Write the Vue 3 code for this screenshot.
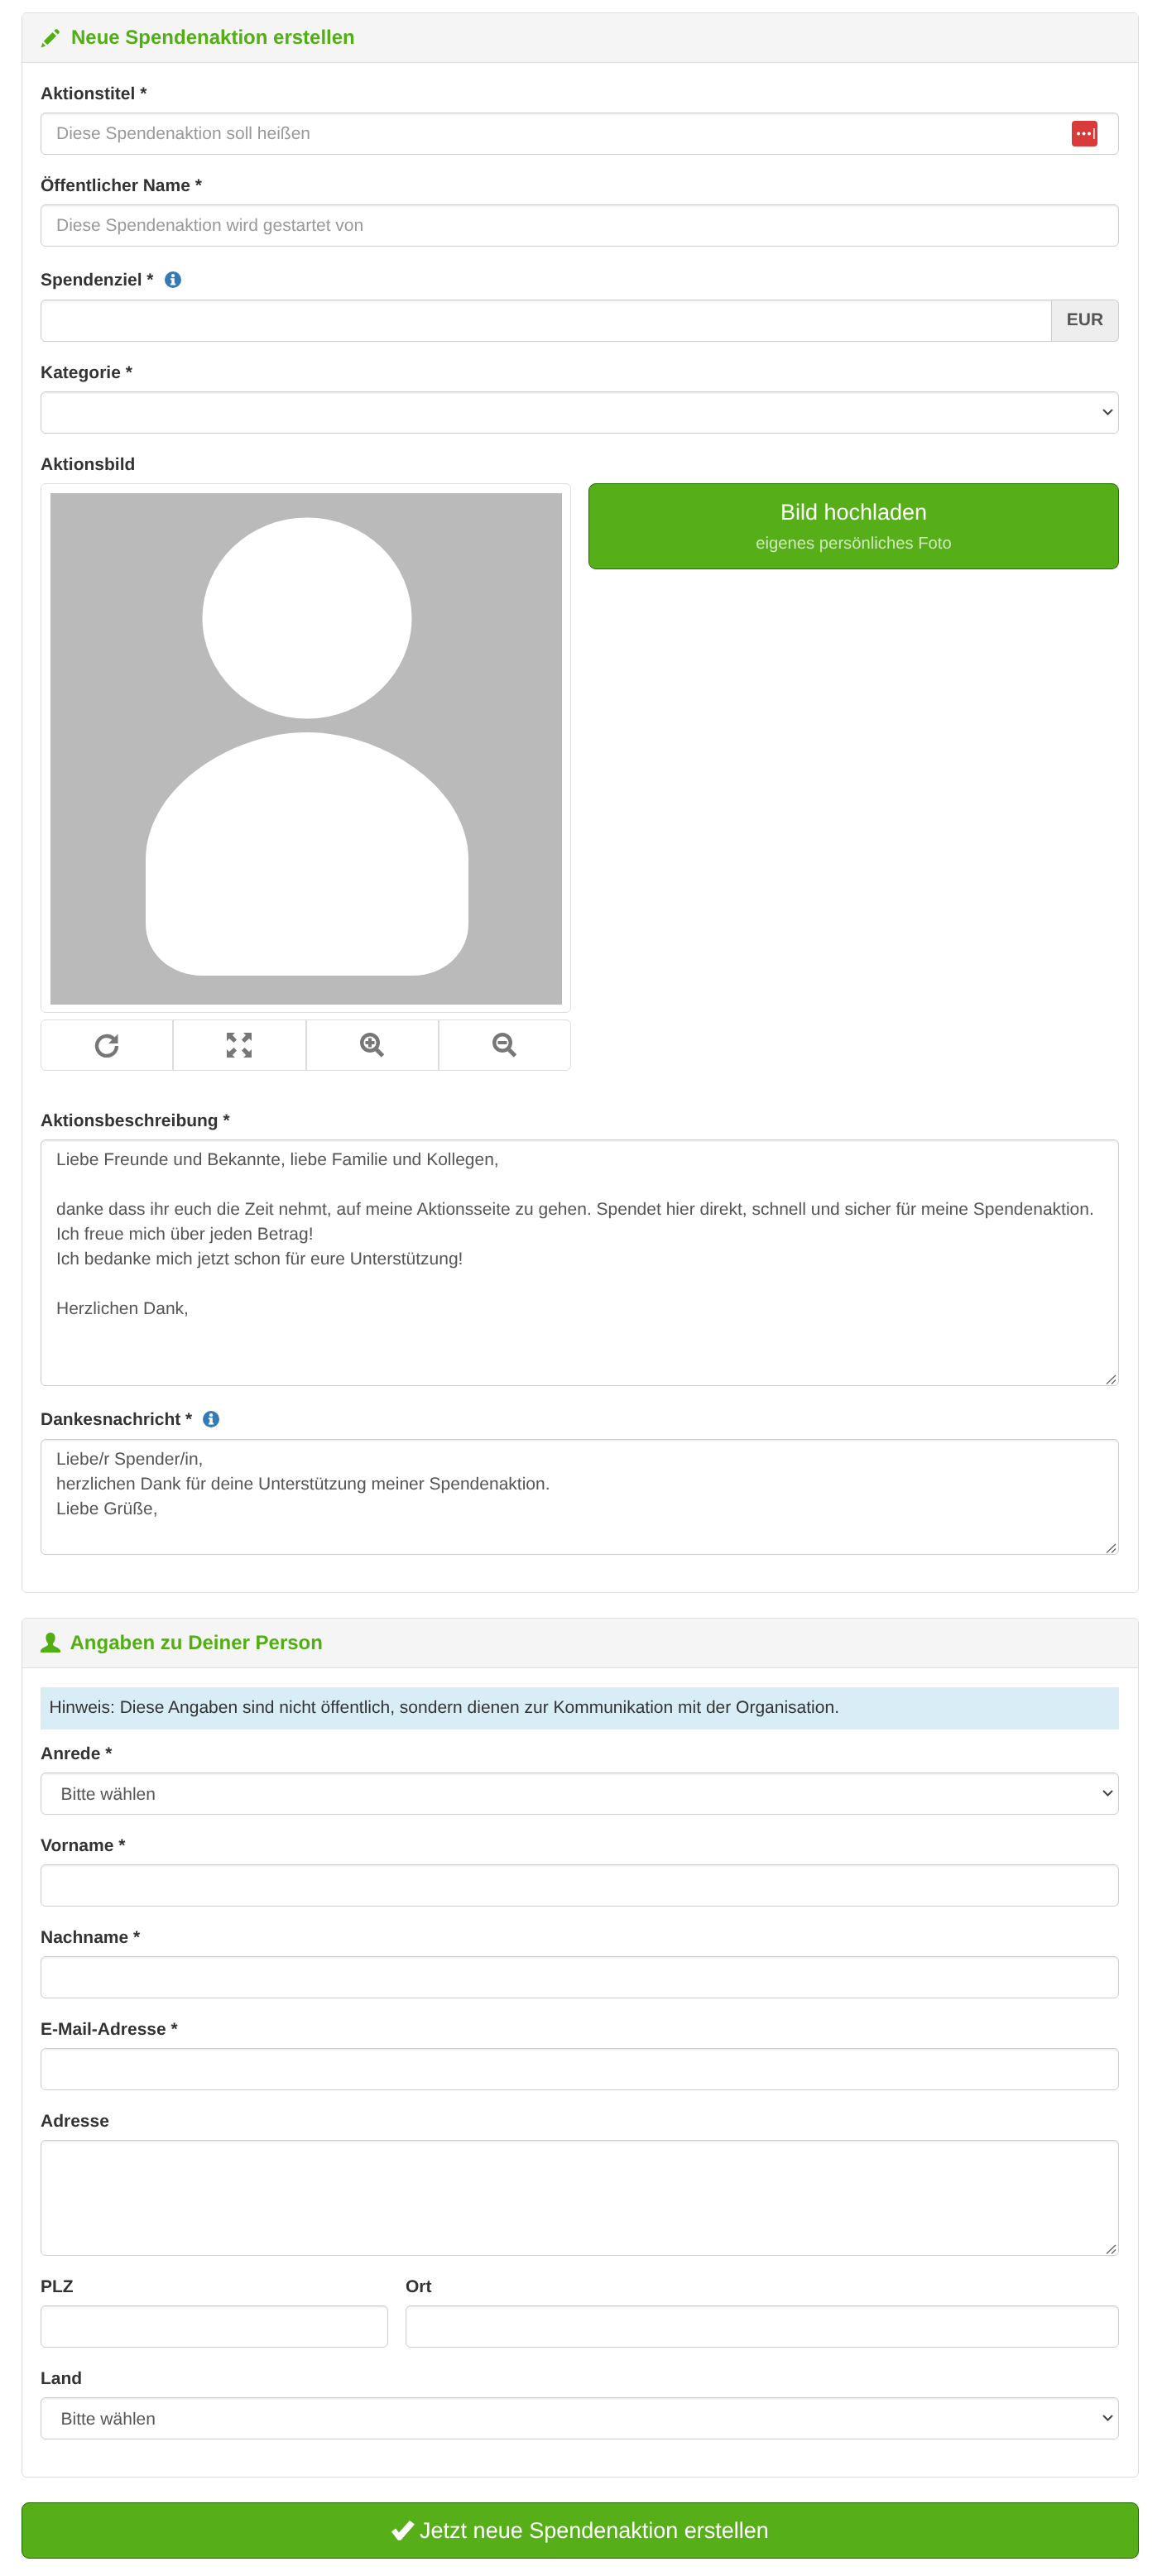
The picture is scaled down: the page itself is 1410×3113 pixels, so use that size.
<template>
  <div class="page">
    <section class="panel">
      <h3 class="panel-heading">
        <svg class="head-icon" viewBox="0 0 24 24">
          <polygon points="0.5,23.5 2.5,17.8 6.2,21.5" />
          <polygon points="3.8,15.8 14.6,5 19,9.4 8.2,20.2" />
          <polygon points="16.4,3.2 18,1.6 20,1.2 22.8,4 22.4,6 20.8,7.6" />
        </svg>
        <span>Neue Spendenaktion erstellen</span>
      </h3>
      <div class="panel-body">
        <div class="group">
          <label>Aktionstitel *</label>
          <div class="overlay-wrap">
            <input class="control" type="text" placeholder="Diese Spendenaktion soll heißen" />
            <svg class="pw-icon" viewBox="0 0 31 31">
              <rect width="31" height="31" rx="4" fill="#d93a3a" />
              <circle cx="8" cy="15.5" r="2" fill="#fff" />
              <circle cx="14.5" cy="15.5" r="2" fill="#fff" />
              <circle cx="21" cy="15.5" r="2" fill="#fff" />
              <rect x="26" y="9" width="1.6" height="13" fill="#fff" />
            </svg>
          </div>
        </div>
        <div class="group">
          <label>Öffentlicher Name *</label>
          <input class="control" type="text" placeholder="Diese Spendenaktion wird gestartet von" />
        </div>
        <div class="group">
          <label class="with-info">
            Spendenziel *
            <svg class="info" viewBox="0 0 20 20">
              <circle cx="10" cy="10" r="10" fill="#337ab7" />
              <circle cx="10" cy="5.2" r="2.1" fill="#fff" />
              <path d="M7 8.2h4.8v6.2h1.4v2H6.9v-2h1.4v-4.2H7z" fill="#fff" />
            </svg>
          </label>
          <div class="input-group">
            <input class="control" type="text" />
            <span class="addon">EUR</span>
          </div>
        </div>
        <div class="group">
          <label>Kategorie *</label>
          <div class="overlay-wrap">
            <select class="control"><option></option></select>
            <svg class="chevron" viewBox="0 0 13 8"><path d="M1 1l5.5 5.5L12 1" /></svg>
          </div>
        </div>
        <div class="group group-image">
          <label>Aktionsbild</label>
          <div class="image-row">
            <div>
              <div class="thumb">
                <svg class="avatar" viewBox="0 0 618 618">
                  <rect width="618" height="618" fill="#bababa" />
                  <ellipse cx="310" cy="151" rx="126.5" ry="121.5" fill="#fff" />
                  <path d="M115 443C115 355 220 289 310 289C400 289 505 355 505 443V520C505 558 473 583 438 583H183C147 583 115 558 115 520Z" fill="#fff" />
                </svg>
              </div>
              <div class="tools">
                <button type="button">
                  <svg class="tool" viewBox="0 0 30 30">
                    <path d="M23.5 7.5A12 12 0 1 0 27 16" fill="none" stroke="#777" stroke-width="4.4" />
                    <polygon points="28.5,1.5 28.5,13 17,13" fill="#777" />
                  </svg>
                </button>
                <button type="button">
                  <svg class="tool" viewBox="0 0 30 30" fill="#777">
                    <polygon points="0,0 10,0 7,3 12,8.5 8.5,12 3,7 0,10" />
                    <polygon points="30,0 20,0 23,3 18,8.5 21.5,12 27,7 30,10" />
                    <polygon points="0,30 10,30 7,27 12,21.5 8.5,18 3,23 0,20" />
                    <polygon points="30,30 20,30 23,27 18,21.5 21.5,18 27,23 30,20" />
                  </svg>
                </button>
                <button type="button">
                  <svg class="tool" viewBox="0 0 30 30">
                    <circle cx="12" cy="12" r="9.8" fill="none" stroke="#777" stroke-width="4.4" />
                    <path d="M20 20.5l7.5 7.5" stroke="#777" stroke-width="5" />
                    <path d="M12 6.5v11M6.5 12h11" stroke="#777" stroke-width="4" />
                  </svg>
                </button>
                <button type="button">
                  <svg class="tool" viewBox="0 0 30 30">
                    <circle cx="12" cy="12" r="9.8" fill="none" stroke="#777" stroke-width="4.4" />
                    <path d="M20 20.5l7.5 7.5" stroke="#777" stroke-width="5" />
                    <path d="M6.5 12h11" stroke="#777" stroke-width="4" />
                  </svg>
                </button>
              </div>
            </div>
            <button type="button" class="btn upload">
              Bild hochladen
              <small>eigenes persönliches Foto</small>
            </button>
          </div>
        </div>
        <div class="group">
          <label>Aktionsbeschreibung *</label>
          <div class="overlay-wrap">
            <textarea class="control text-desc" :value="description"></textarea>
            <svg class="grip" viewBox="0 0 14 14"><path d="M1 12.5L12 2M7 12.5l5-5" /></svg>
          </div>
        </div>
        <div class="group">
          <label class="with-info">
            Dankesnachricht *
            <svg class="info" viewBox="0 0 20 20">
              <circle cx="10" cy="10" r="10" fill="#337ab7" />
              <circle cx="10" cy="5.2" r="2.1" fill="#fff" />
              <path d="M7 8.2h4.8v6.2h1.4v2H6.9v-2h1.4v-4.2H7z" fill="#fff" />
            </svg>
          </label>
          <div class="overlay-wrap">
            <textarea class="control text-short" :value="thanks"></textarea>
            <svg class="grip" viewBox="0 0 14 14"><path d="M1 12.5L12 2M7 12.5l5-5" /></svg>
          </div>
        </div>
      </div>
    </section>

    <section class="panel">
      <h3 class="panel-heading person">
        <svg class="head-icon" viewBox="0 0 24 24">
          <path d="M12 0C15.5 0 17.6 2.5 17.6 6C17.6 9 16.6 11.5 15 13V14.5C15 16.5 24 18.5 24 22V24H0V22C0 18.5 9 16.5 9 14.5V13C7.4 11.5 6.4 9 6.4 6C6.4 2.5 8.5 0 12 0Z" />
        </svg>
        <span>Angaben zu Deiner Person</span>
      </h3>
      <div class="panel-body person-body">
        <div class="alert">Hinweis: Diese Angaben sind nicht öffentlich, sondern dienen zur Kommunikation mit der Organisation.</div>
        <div class="group">
          <label>Anrede *</label>
          <div class="overlay-wrap">
            <select class="control"><option>Bitte wählen</option></select>
            <svg class="chevron" viewBox="0 0 13 8"><path d="M1 1l5.5 5.5L12 1" /></svg>
          </div>
        </div>
        <div class="group">
          <label>Vorname *</label>
          <input class="control" type="text" />
        </div>
        <div class="group">
          <label>Nachname *</label>
          <input class="control" type="text" />
        </div>
        <div class="group">
          <label>E-Mail-Adresse *</label>
          <input class="control" type="text" />
        </div>
        <div class="group">
          <label>Adresse</label>
          <div class="overlay-wrap">
            <textarea class="control text-short"></textarea>
            <svg class="grip" viewBox="0 0 14 14"><path d="M1 12.5L12 2M7 12.5l5-5" /></svg>
          </div>
        </div>
        <div class="city-row">
          <div class="group">
            <label>PLZ</label>
            <input class="control" type="text" />
          </div>
          <div class="group">
            <label>Ort</label>
            <input class="control" type="text" />
          </div>
        </div>
        <div class="group">
          <label>Land</label>
          <div class="overlay-wrap">
            <select class="control"><option>Bitte wählen</option></select>
            <svg class="chevron" viewBox="0 0 13 8"><path d="M1 1l5.5 5.5L12 1" /></svg>
          </div>
        </div>
      </div>
    </section>

    <button type="button" class="btn submit">
      <svg class="check" viewBox="0 0 28 24">
        <polygon points="0,13.5 5,9.5 9,14.5 22,0 28,4.5 11,24 8,24" fill="#fff" />
      </svg>
      Jetzt neue Spendenaktion erstellen
    </button>
  </div>
</template>

<script setup>
const description = `Liebe Freunde und Bekannte, liebe Familie und Kollegen,

danke dass ihr euch die Zeit nehmt, auf meine Aktionsseite zu gehen. Spendet hier direkt, schnell und sicher für meine Spendenaktion.
Ich freue mich über jeden Betrag!
Ich bedanke mich jetzt schon für eure Unterstützung!

Herzlichen Dank,`

const thanks = `Liebe/r Spender/in,
herzlichen Dank für deine Unterstützung meiner Spendenaktion.
Liebe Grüße,`
</script>

<style>
body {
  margin: 0;
  background: #fff;
}
</style>

<style scoped>
.page {
  box-sizing: border-box;
  width: 1410px;
  padding: 15px 34px 21px 26px;
  font-family: "Liberation Sans", Arial, sans-serif;
  font-size: 21px;
  line-height: 30px;
  color: #333;
  text-rendering: geometricPrecision;
  will-change: transform;
}

/* Panels */
.panel {
  margin-bottom: 30px;
  background: #fff;
  border: 1px solid #ddd;
  border-radius: 6px;
}

.panel-heading {
  display: flex;
  align-items: center;
  gap: 13px;
  box-sizing: border-box;
  height: 60px;
  margin: 0;
  padding: 0 22px;
  background: #f5f5f5;
  border-bottom: 1px solid #ddd;
  border-radius: 5px 5px 0 0;
  color: #52ae14;
  font-size: 24px;
  font-weight: 700;
}

.panel-heading span {
  padding-top: 1px;
}

.panel-heading.person {
  gap: 11.5px;
}

.person .head-icon {
  margin-top: -1px;
}

.head-icon {
  width: 24px;
  height: 24px;
  flex: none;
  fill: #52ae14;
}

.panel-body {
  padding: 22.5px 23px 22.5px 22px;
}

/* Form */
.group {
  margin-bottom: 22.5px;
}

.group label {
  display: block;
  margin-bottom: 7.5px;
  font-weight: 700;
}

.person-body .group label {
  padding-top: 0.5px;
  margin-bottom: 7px;
}

.group label.with-info {
  display: flex;
  align-items: center;
  box-sizing: border-box;
  height: 34px;
  padding-top: 2px;
  gap: 13px;
}

.info {
  width: 20px;
  height: 20px;
  margin-bottom: 2px;
}

.control {
  display: block;
  box-sizing: border-box;
  width: 100%;
  height: 51px;
  padding: 9px 18px;
  background: #fff;
  border: 1px solid #ccc;
  border-radius: 6px;
  box-shadow: inset 0 1.5px 1.5px rgba(0, 0, 0, 0.075);
  color: #555;
  font-family: inherit;
  font-size: 21px;
  line-height: 30px;
  text-rendering: geometricPrecision;
}

.control::placeholder {
  color: #999;
}

select.control {
  appearance: none;
  padding-top: 10px;
  padding-bottom: 8px;
  padding-left: 23.5px;
}

textarea.control {
  resize: none;
}

.text-desc {
  height: 298px;
}

.text-short {
  height: 140px;
}

.overlay-wrap {
  position: relative;
}

.pw-icon {
  position: absolute;
  top: 10px;
  right: 26px;
  width: 31px;
  height: 31px;
}

.chevron {
  position: absolute;
  top: 21px;
  right: 7px;
  width: 13px;
  height: 8px;
  fill: none;
  stroke: #444;
  stroke-width: 2;
  pointer-events: none;
}

.grip {
  position: absolute;
  right: 2px;
  bottom: 1px;
  width: 14px;
  height: 14px;
  fill: none;
  stroke: #666;
  stroke-width: 1.4;
  pointer-events: none;
}

.input-group {
  display: flex;
}

.input-group .control {
  flex: 1;
  border-radius: 6px 0 0 6px;
}

.addon {
  box-sizing: border-box;
  width: 81px;
  height: 51px;
  padding: 9px 0;
  background: #eee;
  border: 1px solid #ccc;
  border-left: 0;
  border-radius: 0 6px 6px 0;
  color: #555;
  font-weight: 700;
  text-align: center;
}

/* Image upload */
.group-image {
  margin-bottom: 45.5px;
}

.image-row {
  display: grid;
  grid-template-columns: 1fr 1fr;
  gap: 21px;
  align-items: start;
}

.thumb {
  box-sizing: border-box;
  height: 640px;
  padding: 10.5px 10px 10.5px 11px;
  border: 1px solid #ddd;
  border-radius: 6px;
}

.avatar {
  display: block;
  width: 618px;
  height: 618px;
}

.tools {
  display: flex;
  height: 62px;
  margin-top: 8px;
}

.tools button {
  flex: 1;
  display: flex;
  align-items: center;
  justify-content: center;
  padding: 0;
  background: #fff;
  border: 1px solid #ddd;
}

.tools button:first-child {
  border-radius: 6px 0 0 6px;
}

.tools button:last-child {
  border-radius: 0 6px 6px 0;
}

.tool {
  width: 30px;
  height: 30px;
}

.btn {
  box-sizing: border-box;
  background: #56ae18;
  border: 1px solid #1a6e00;
  color: #fff;
  font-family: inherit;
  font-size: 27px;
  text-rendering: geometricPrecision;
}

.upload {
  height: 104px;
  padding: 0 18px;
  border-radius: 9px;
  line-height: 36px;
}

.upload small {
  display: block;
  margin-top: 5px;
  color: #cfe8bb;
  font-size: 20.25px;
  line-height: 30px;
}

/* Person */
.alert {
  height: 51px;
  box-sizing: border-box;
  margin-bottom: 15px;
  padding: 10.5px;
  background: #d9edf7;
  color: #333;
}

.city-row {
  display: grid;
  grid-template-columns: 420px 1fr;
  gap: 21px;
}

.submit {
  display: flex;
  align-items: center;
  justify-content: center;
  gap: 6px;
  width: 100%;
  height: 68px;
  border-radius: 9px;
}

.check {
  width: 28px;
  height: 24px;
}
</style>
